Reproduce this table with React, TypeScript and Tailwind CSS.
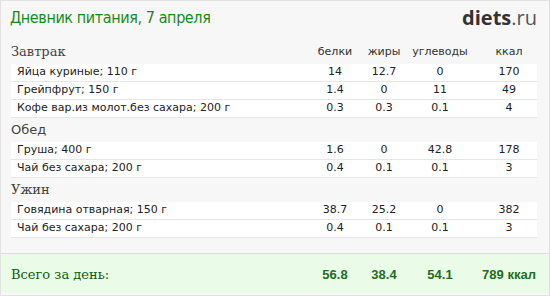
import React from "react";

type Item = { name: string; b: string; f: string; c: string; k: string };

const meals: { title: string; sans?: boolean; items: Item[] }[] = [
  {
    title: "Завтрак",
    items: [
      { name: "Яйца куриные; 110 г", b: "14", f: "12.7", c: "0", k: "170" },
      { name: "Грейпфрут; 150 г", b: "1.4", f: "0", c: "11", k: "49" },
      { name: "Кофе вар.из молот.без сахара; 200 г", b: "0.3", f: "0.3", c: "0.1", k: "4" },
    ],
  },
  {
    title: "Обед",
    sans: true,
    items: [
      { name: "Груша; 400 г", b: "1.6", f: "0", c: "42.8", k: "178" },
      { name: "Чай без сахара; 200 г", b: "0.4", f: "0.1", c: "0.1", k: "3" },
    ],
  },
  {
    title: "Ужин",
    items: [
      { name: "Говядина отварная; 150 г", b: "38.7", f: "25.2", c: "0", k: "382" },
      { name: "Чай без сахара; 200 г", b: "0.4", f: "0.1", c: "0.1", k: "3" },
    ],
  },
];

const sans = "font-['DejaVu_Sans',Verdana,sans-serif]";
const serif = "font-['DejaVu_Serif',Georgia,serif]";

function Cols({ b, f, c, k }: { b: string; f: string; c: string; k: string }) {
  return (
    <>
      <div className="w-[50px] text-center">{b}</div>
      <div className="w-[48px] text-center">{f}</div>
      <div className="w-[64px] text-center">{c}</div>
      <div className="ml-[12px] w-[50px] text-center">{k}</div>
    </>
  );
}

export default function App() {
  return (
    <div className="w-[550px] h-[296px] bg-[#f7f7f7] border border-[#e2e2e2] overflow-hidden">
      <div className="h-[39px] flex items-center justify-between pl-[9px] pr-[12px] pb-[6px]">
        <h1 className="font-['DejaVu_Sans_Condensed','DejaVu_Sans',sans-serif] font-stretch-condensed text-[16px] text-[#178a17] tracking-[-0.4px]">Дневник питания, 7 апреля</h1>
        <div className="font-['Open_Sans',sans-serif] text-[20px] leading-none text-[#333]">
          <span className="font-bold">diets</span>
          <span className="text-[#555]">.ru</span>
        </div>
      </div>

      <div className="pl-[10px] pr-[12px]">
        {meals.map((m, i) => (
          <div key={m.title}>
            <div className="h-[24px] flex items-center">
              <div className={`flex-1 text-[13px] text-[#444] ${m.sans ? sans : serif}`}>{m.title}</div>
              {i === 0 && (
                <div className={`flex text-[11px] text-[#333] ${sans} pr-[3px]`}>
                  <Cols b="белки" f="жиры" c="углеводы" k="ккал" />
                </div>
              )}
            </div>
            {m.items.map((it, j) => (
              <div key={j} className={`h-[18px] flex items-center bg-white border-b border-[#e6e6e6] pl-[6px] pr-[3px] text-[11px] text-[#222] ${sans}`}>
                <div className="flex-1">{it.name}</div>
                <Cols b={it.b} f={it.f} c={it.c} k={it.k} />
              </div>
            ))}
          </div>
        ))}
      </div>

      <div className="h-[15px]" />
      <div className="h-[40px] flex items-center bg-[#eafbe8] border-t border-[#dcdcdc] pl-[10px] pr-[15px]">
        <div className={`flex-1 ${serif} text-[13px] text-[#0d5e0d] pt-[2px]`}>Всего за день:</div>
        <div className="flex font-['Liberation_Sans',Arial,sans-serif] font-bold text-[13px] text-[#1e6e1e] pt-[2px]">
          <div className="w-[50px] text-center">56.8</div>
          <div className="w-[48px] text-center">38.4</div>
          <div className="w-[64px] text-center">54.1</div>
          <div className="ml-[12px] w-[50px] text-center whitespace-nowrap flex justify-center">
            <span>789 ккал</span>
          </div>
        </div>
      </div>
    </div>
  );
}
